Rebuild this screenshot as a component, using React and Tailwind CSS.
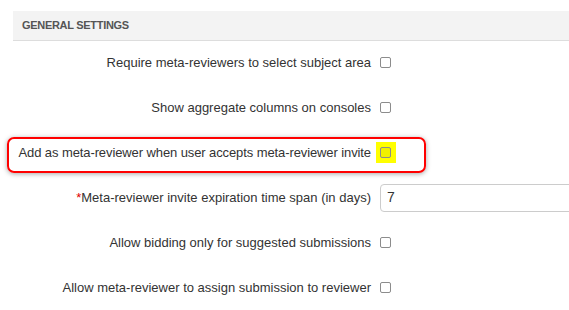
import React from "react";

function Box() {
    return <span className="block w-[11px] h-[11px] border border-[#8c8c8c] rounded-[2px] bg-white" />;
}

function Row({ children, control, marked }) {
    return (
        <div className="relative flex items-center h-[45px]">
            {marked && (
                <div className="absolute left-[7px] top-[7px] w-[419px] h-[36px] border-2 border-[#ff0000] rounded-[7px] shadow-[0_1px_5px_rgba(0,0,0,0.35)]" />
            )}
            <div className="w-[371px] shrink-0 text-right">{children}</div>
            <div className="ml-[9px] shrink-0">{control}</div>
        </div>
    );
}

export default function App() {
    return (
        <div className="w-[569px] h-[310px] overflow-hidden bg-white text-[13px] text-[#333] font-['Liberation_Sans',Arial,sans-serif]">
            <div className="ml-[13px] mt-[11px] h-[30px] flex items-center pl-[9px] bg-[#f3f3f3] border-b border-[#dddddd]">
                <span className="text-[11px] font-bold text-[#555] tracking-[-0.3px]">GENERAL SETTINGS</span>
            </div>
            <div className="-mt-px">
                <Row control={<Box />}>Require meta-reviewers to select subject area</Row>
                <Row control={<Box />}>Show aggregate columns on consoles</Row>
                <Row
                    marked
                    control={
                        <div className="relative">
                            <div className="absolute -left-[4px] -top-[5px] w-[20px] h-[21px] bg-[#ffff00]" />
                            <span className="relative block w-[11px] h-[11px] border border-[#8c8c8c] rounded-[2px] bg-[#f0f000]" />
                        </div>
                    }
                >
                    <span className="tracking-[-0.1px]">Add as meta-reviewer when user accepts meta-reviewer invite</span>
                </Row>
                <Row
                    control={
                        <div className="w-[220px] h-[28px] flex items-center pl-[6px] border border-[#cccccc] rounded-[4px] bg-white text-[14px]">
                            7
                        </div>
                    }
                >
                    <span className="text-[#e00000]">*</span>Meta-reviewer invite expiration time span (in days)
                </Row>
                <Row control={<Box />}>Allow bidding only for suggested submissions</Row>
                <Row control={<Box />}>Allow meta-reviewer to assign submission to reviewer</Row>
            </div>
        </div>
    );
}
